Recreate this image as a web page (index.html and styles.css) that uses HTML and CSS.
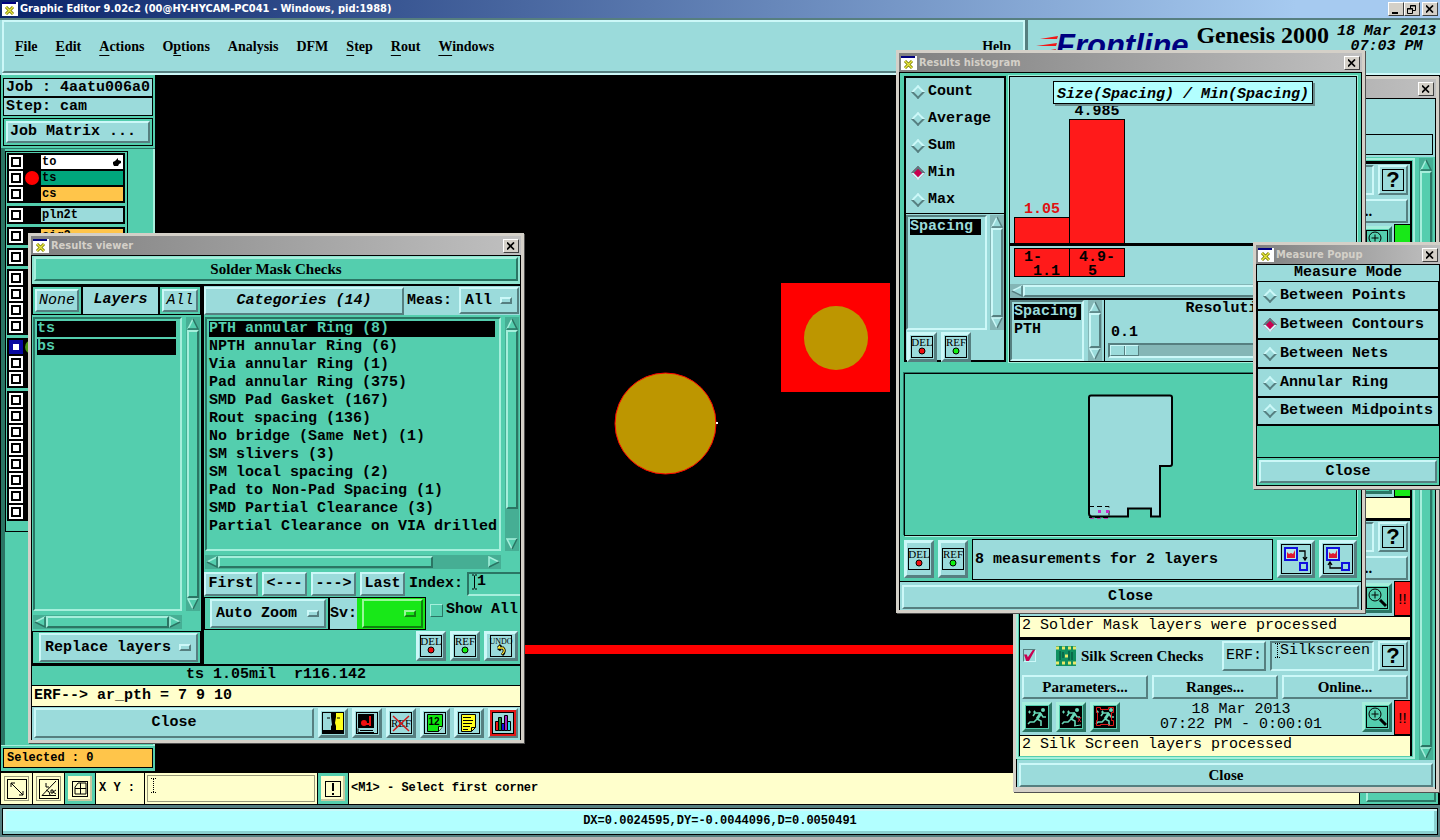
FILE: index.html
```
<!DOCTYPE html>
<html lang="en">
<head>
  <meta charset="UTF-8">
  <meta name="viewport" content="width=device-width, initial-scale=1.0">
  <title>Graphic Editor</title>
  <link rel="stylesheet" href="styles.css">
</head>
<body>

<!-- Shared icon symbols -->
<svg class="symbols" aria-hidden="true">
  <symbol id="i-win" viewBox="0 0 16 14">
    <rect width="16" height="14" fill="#fff"/><rect width="14" height="2" fill="#000080"/>
    <path d="M4 5l7 7M11 5l-7 7" stroke="#777700" stroke-width="3"/><path d="M4 5l7 7M11 5l-7 7" stroke="#e8e840" stroke-width="1.4"/>
  </symbol>
  <symbol id="i-close" viewBox="0 0 8 8"><path d="M0 .5l7 7M7 .5l-7 7" stroke="#000" stroke-width="1.7"/></symbol>
  <symbol id="i-up" viewBox="0 0 12 12"><path d="M6 1L11 11H1z" fill="var(--face)"/><path d="M6 1L1 11" stroke="var(--hi)" stroke-width="1.5"/><path d="M6 1l5 10H1" fill="none" stroke="var(--lo)" stroke-width="1.5"/></symbol>
  <symbol id="i-down" viewBox="0 0 12 12"><path d="M6 11L11 1H1z" fill="var(--face)"/><path d="M11 1H1l5 10" fill="none" stroke="var(--hi)" stroke-width="1.5"/><path d="M11 1L6 11" stroke="var(--lo)" stroke-width="1.5"/></symbol>
  <symbol id="i-left" viewBox="0 0 12 12"><path d="M1 6L11 1v10z" fill="var(--face)"/><path d="M11 1L1 6" stroke="var(--hi)" stroke-width="1.5"/><path d="M11 1v10L1 6" fill="none" stroke="var(--lo)" stroke-width="1.5"/></symbol>
  <symbol id="i-right" viewBox="0 0 12 12"><path d="M11 6L1 1v10z" fill="var(--face)"/><path d="M1 11V1l10 5" fill="none" stroke="var(--hi)" stroke-width="1.5"/><path d="M11 6L1 11" stroke="var(--lo)" stroke-width="1.5"/></symbol>
  <symbol id="i-caret" viewBox="0 0 5 15"><path d="M0 .5h2M3 .5h2M0 14.5h2M3 14.5h2M2.5 1v13" stroke="#000"/></symbol>
  <symbol id="i-caret-dim" viewBox="0 0 5 15"><path d="M2.5 1v13M0 .5h5M0 14.5h5" stroke="#000" stroke-dasharray="1 1"/></symbol>
  <symbol id="i-del" viewBox="0 0 22 22"><rect x=".5" y=".5" width="21" height="21" fill="none" stroke="#000"/><text x="11" y="10" text-anchor="middle" class="icon-text">DEL</text><circle cx="11" cy="15" r="3" fill="#f01010" stroke="#000"/></symbol>
  <symbol id="i-ref" viewBox="0 0 22 22"><rect x=".5" y=".5" width="21" height="21" fill="none" stroke="#000"/><text x="11" y="10" text-anchor="middle" class="icon-text">REF</text><circle cx="11" cy="15" r="3" fill="#10f010" stroke="#000"/></symbol>
  <symbol id="i-undo" viewBox="0 0 26 22"><rect x="2.500" y=".5" width="21" height="21" fill="none" stroke="#000"/><text x="13" y="9" text-anchor="middle" class="icon-text-small">UNDO</text><path d="M10 13h5q3 3-1 7M10 13l3-3M10 13l3 2" fill="none" stroke="#000" stroke-width="3"/><path d="M10 13h5q3 3-1 6M10 13l2-2" fill="none" stroke="#ffe838" stroke-width="1.3"/></symbol>
  <symbol id="i-contrast" viewBox="0 0 22 22"><path d="M0 0h22v22H0z"/><path d="M1 1h8v4l1 8-1 1v4H1z" fill="#9bdbdb"/><path d="M14 1h7v17h-7v-4l-1-3 1-6z" fill="#ffff20"/><path d="M5 6h3M15 6h3" stroke="#000"/></symbol>
  <symbol id="i-disk" viewBox="0 0 22 22"><rect x=".5" y=".5" width="21" height="21" fill="none" stroke="#000"/><path d="M2 2h16v14H2z"/><circle cx="8" cy="11" r="3" fill="#f01010"/><path d="M8 12h6M14 4v10" stroke="#f01010" stroke-width="2"/><path d="M4 18.500h13M2 16.500v4h16" fill="none" stroke="#000"/></symbol>
  <symbol id="i-noref" viewBox="0 0 22 22"><rect x=".5" y=".5" width="21" height="21" fill="none" stroke="#000"/><text x="11" y="15" text-anchor="middle" class="icon-text">REF</text><path d="M3 4l16 15M19 4L3 19" stroke="#d01818" stroke-width="1.500"/></symbol>
  <symbol id="i-page12" viewBox="0 0 22 22"><rect x=".5" y=".5" width="21" height="21" fill="none" stroke="#000"/><path d="M3.500 2.500h15v12l-4 5h-11z" fill="#10e810" stroke="#000"/><path d="M18.500 14.500h-4v5" fill="#b0ffb0" stroke="#000"/><text x="10" y="13" text-anchor="middle" class="icon-num">12</text></symbol>
  <symbol id="i-notes" viewBox="0 0 22 22"><rect x=".5" y=".5" width="21" height="21" fill="none" stroke="#000"/><path d="M3.500 2.500h14v13l-4 4h-10z" fill="#ffff20" stroke="#000"/><path d="M17.500 15.500h-4v4M5 5.500h8M5 8.500h10M5 11.500h9M5 14.500h7M5 17.500h5" fill="none" stroke="#000"/></symbol>
  <symbol id="i-chart" viewBox="0 0 22 22"><rect x=".5" y=".5" width="21" height="21" fill="#9bdbdb" stroke="#000"/><g stroke="#000"><path d="M3.500 9.500h3v9h-3z" fill="#f01818"/><path d="M6.500 5.500h3v13h-3z" fill="#109030"/><path d="M9.500 11.500h3v7h-3z" fill="#1010e0"/><path d="M12.500 3.500h3v15h-3z" fill="#a020c0"/><path d="M15.500 9.500h3v9h-3z" fill="#20d8f0"/></g></symbol>
  <symbol id="i-zoom" viewBox="0 0 22 22"><rect x=".5" y=".5" width="21" height="21" fill="none" stroke="#000"/><circle cx="9" cy="8" r="6" fill="none" stroke="#000"/><path d="M5.500 8h7M9 4.500v7" stroke="#000"/><path d="M14 13l6 6" stroke="#000" stroke-width="3"/></symbol>
  <symbol id="i-run" viewBox="0 0 22 22">
    <path d="M0 0h22v22H0z"/>
    <circle cx="17" cy="4" r="2" fill="#68d8b8"/>
    <path d="M15 7l-4 6" stroke="#68d8b8" stroke-width="3"/>
    <path d="M15 7H9L7 10M15 8l2 3h3M11 13l4 2v5M11 13l-3 3H4l-2 2" fill="none" stroke="#68d8b8" stroke-width="1.600"/>
    <path d="M2 6h3M3.500 4.500v3M7 6h3M8.500 4.500v3" stroke="#68d8b8"/>
  </symbol>
  <symbol id="i-runx" viewBox="0 0 22 22"><use href="#i-run"/><path d="M17 11l4 5M21 11l-3 5" stroke="#d01830"/><path d="M14 20l7-1" stroke="#68d8b8"/></symbol>
  <symbol id="i-runr" viewBox="0 0 22 22"><use href="#i-run"/><path d="M2.500 1.500h4v2h8v-2h5v5h-2v8h2v5h-5v-1h-8v1h-4v-5h1v-8h-1z" fill="none" stroke="#e01818"/></symbol>
  <symbol id="i-pcb" viewBox="0 0 20 20"><path d="M0 0h20v20H0z" fill="#109060"/><path d="M0 2h3M6 2h3M12 2h3M17 2h3M0 17h3M6 17h3M12 17h3M17 17h3M9 10h3" stroke="#e8e868" stroke-width="3"/><path d="M4 5v9M7 6v6M13 5v9M16 6v8" stroke="#043"/></symbol>
  <symbol id="i-diag" viewBox="0 0 22 22"><rect x="1.500" y="1.500" width="19" height="19" fill="none" stroke="#000"/><path d="M5 5l12 12M5 9V5h4M13 17h4v-4" fill="none" stroke="#000"/></symbol>
  <symbol id="i-angle" viewBox="0 0 22 22"><rect x="1.500" y="1.500" width="19" height="19" fill="none" stroke="#000"/><path d="M18 3L4 17.500h14M8 5v4h3M8 12q4 1 4 5M13 12h2v3h-2zM18 12l-3 2 3 2" fill="none" stroke="#000"/></symbol>
  <symbol id="i-grid" viewBox="0 0 22 22"><rect x="3.500" y="3.500" width="15" height="15" fill="none" stroke="#000"/><path d="M6 9l3-4h8v11H6zM11.500 5v11M6 10.500h11" fill="none" stroke="#000"/></symbol>
  <symbol id="i-bang" viewBox="0 0 22 22"><rect x="3.500" y="3.500" width="15" height="15" fill="none" stroke="#000"/><path d="M11 5v8M11 15v2" stroke="#000" stroke-width="2"/></symbol>
  <symbol id="i-copydown" viewBox="0 0 30 30"><rect x=".5" y=".5" width="29" height="29" fill="none" stroke="#000"/><rect x="4" y="4" width="12" height="12" fill="#b8e8e8" stroke="#1010e0" stroke-width="2"/><path d="M6 8l2 2 2-1 2 1 2-4v8H6z" fill="#e01830"/><path d="M18 7h6v8M22 13l2 3 2-3" fill="none" stroke="#000" stroke-width="1.300"/><rect x="19" y="19" width="7" height="7" fill="none" stroke="#1010e0" stroke-width="2"/></symbol>
  <symbol id="i-copyup" viewBox="0 0 30 30"><rect x=".5" y=".5" width="29" height="29" fill="none" stroke="#000"/><rect x="4" y="4" width="12" height="12" fill="#b8e8e8" stroke="#1010e0" stroke-width="2"/><path d="M6 8l2 2 2-1 2 1 2-4v8H6z" fill="#e01830"/><path d="M18 24H7v-5M5 21l2-3 2 3" fill="none" stroke="#000" stroke-width="1.300"/><rect x="19" y="19" width="7" height="7" fill="none" stroke="#1010e0" stroke-width="2"/></symbol>
  <symbol id="i-hand" viewBox="0 0 8 8"><path d="M5 0v2l3 1v2L6 6 5 8H1L0 6V4l2-1z"/></symbol>
</svg>

<!-- Main window -->
<header class="main-title">
  <svg class="win-icon"><use href="#i-win"/></svg>
  <span class="win-name">Graphic Editor 9.02c2 (00@HY-HYCAM-PC041 - Windows, pid:1988)</span>
  <div class="win-buttons">
    <button class="win-button" aria-label="Minimize"><svg width="10" height="9"><path d="M1 8h6" stroke="#000" stroke-width="2"/></svg></button>
    <button class="win-button" aria-label="Restore"><svg width="10" height="9"><path d="M3.500 3V.5h5v5H6M3 1h6M.5 3.500h5v5h-5zM0 4h6" fill="none" stroke="#000"/></svg></button>
    <button class="win-button apart" aria-label="Close"><svg width="8" height="8"><use href="#i-close"/></svg></button>
  </div>
</header>

<div class="top-bar aqua">
  <nav class="menu-bar">
    <a href="#"><u>F</u>ile</a>
    <a href="#"><u>E</u>dit</a>
    <a href="#"><u>A</u>ctions</a>
    <a href="#">O<u>p</u>tions</a>
    <a href="#">Analysis</a>
    <a href="#">DFM</a>
    <a href="#"><u>S</u>tep</a>
    <a href="#"><u>R</u>out</a>
    <a href="#"><u>W</u>indows</a>
    <a href="#" class="help">Help</a>
  </nav>
  <div class="brand">
    <div class="logo">
      <svg width="22" height="20"><path d="M22 1L4 4h17zM21 8L0 11h20zM20 14L4 17h15z" fill="#f01818"/></svg>
      <span>Frontline</span>
    </div>
    <span class="product">Genesis 2000</span>
    <span class="clock">18 Mar 2013<br>07:03 PM</span>
  </div>
</div>

<main class="work">
  <aside class="sidebar teal">
    <div class="job">
      <div class="job-line">Job : 4aatu006a0</div>
      <div class="job-line">Step: cam</div>
      <div class="job-matrix"><button class="raised aqua">Job Matrix ...</button></div>
    </div>
    <div class="layers">
      <div class="layer-list">
        <div class="layer-group">
          <label class="layer"><input type="checkbox"><i></i><span class="white">to<svg width="8" height="8"><use href="#i-hand"/></svg></span></label>
          <label class="layer"><input type="checkbox"><i class="dot red"></i><span class="green">ts</span></label>
          <label class="layer"><input type="checkbox"><i></i><span class="orange">cs</span></label>
        </div>
        <div class="layer-group"><label class="layer"><input type="checkbox"><i></i><span class="blue">pln2t</span></label></div>
        <div class="layer-group"><label class="layer"><input type="checkbox"><i></i><span class="orange">sig2</span></label></div>
        <div class="layer-group"><label class="layer"><input type="checkbox"><i></i></label></div>
        <div class="layer-group">
          <label class="layer"><input type="checkbox"><i></i></label>
          <label class="layer"><input type="checkbox"><i></i></label>
          <label class="layer"><input type="checkbox"><i></i></label>
          <label class="layer"><input type="checkbox"><i></i></label>
        </div>
        <div class="layer-group">
          <label class="layer"><input type="checkbox" checked><i class="dot leaf"></i></label>
          <label class="layer"><input type="checkbox"><i></i></label>
          <label class="layer"><input type="checkbox"><i></i></label>
        </div>
        <div class="layer-group">
          <label class="layer"><input type="checkbox"><i></i></label>
          <label class="layer"><input type="checkbox"><i></i></label>
          <label class="layer"><input type="checkbox"><i></i></label>
          <label class="layer"><input type="checkbox"><i></i></label>
          <label class="layer"><input type="checkbox"><i></i></label>
          <label class="layer"><input type="checkbox"><i></i></label>
          <label class="layer"><input type="checkbox"><i></i></label>
          <label class="layer"><input type="checkbox"><i></i></label>
        </div>
      </div>
    </div>
    <div class="selected-box"><div>Selected : 0</div></div>
  </aside>

  <!-- Board drawing -->
  <svg class="board">
    <rect x="340" y="570" width="560" height="9" fill="#f00"/>
    <rect x="626" y="208" width="109" height="109" fill="#f00"/>
    <circle cx="681" cy="263" r="32" fill="#bd9600"/>
    <circle cx="510.500" cy="348.500" r="50.500" fill="#bd9600" stroke="#f00"/>
    <rect x="561" y="347" width="2" height="2" fill="#fff"/>
  </svg>
</main>

<div class="command-bar">
  <button class="mode cream" aria-label="Diagonal"><svg width="22" height="22"><use href="#i-diag"/></svg></button>
  <button class="mode cream" aria-label="Angle"><svg width="22" height="22"><use href="#i-angle"/></svg></button>
  <button class="mode cream on" aria-label="Grid"><svg width="22" height="22"><use href="#i-grid"/></svg></button>
  <label class="xy" for="xy">X Y :</label>
  <div class="entry cream xy-entry"><svg width="5" height="15"><use href="#i-caret-dim"/></svg><input id="xy" type="text"></div>
  <button class="mode cream on" aria-label="Alert"><svg width="22" height="22"><use href="#i-bang"/></svg></button>
  <div class="prompt">&lt;M1&gt; - Select first corner</div>
  <div class="abort teal"><button class="raised">Abort</button></div>
</div>
<footer class="status"><div>DX=0.0024595,DY=-0.0044096,D=0.0050491</div></footer>

<!-- Checklist window -->
<section class="window checks">
  <div class="title"><button class="win-button" aria-label="Close"><svg width="8" height="8"><use href="#i-close"/></svg></button></div>
  <div class="client aqua">
    <div class="checks-head"><div></div></div>
    <div class="checks-body teal">
      <div class="check-list aqua">
        <div class="check">
          <div class="check-top"><div class="erf-entry"></div><button class="raised ask" aria-label="Help"><b>?</b></button></div>
          <div class="check-buttons"><span></span><span></span><button class="raised">Online...</button></div>
          <div class="check-run"><button class="tool teal zoom" aria-label="Zoom"><svg width="22" height="22"><use href="#i-zoom"/></svg></button><div class="flag ok"></div></div>
          <div class="message"></div>
        </div>
        <div class="check">
          <div class="check-top"></div>
          <div class="check-buttons"></div>
          <div class="check-run"></div>
          <div class="message"></div>
        </div>
        <div class="check">
          <div class="check-top"></div>
          <div class="check-buttons"></div>
          <div class="check-run"><button class="tool teal zoom" aria-label="Zoom"><svg width="22" height="22"><use href="#i-zoom"/></svg></button><div class="flag ok"></div></div>
          <div class="message"></div>
        </div>
        <div class="check">
          <div class="check-top"><div class="erf-entry"></div><button class="raised ask" aria-label="Help"><b>?</b></button></div>
          <div class="check-buttons"><span></span><span></span><button class="raised">Online...</button></div>
          <div class="check-run"><button class="tool teal zoom" aria-label="Zoom"><svg width="22" height="22"><use href="#i-zoom"/></svg></button><div class="flag">!!</div></div>
          <div class="message">2 Solder Mask layers were processed</div>
        </div>
        <div class="check">
          <div class="check-top">
            <input type="checkbox" class="tick" id="silk" checked>
            <svg width="20" height="20" class="pcb"><use href="#i-pcb"/></svg>
            <label for="silk">Silk Screen Checks</label>
            <button class="raised erf">ERF:</button>
            <div class="erf-entry"><svg width="5" height="15"><use href="#i-caret-dim"/></svg><input type="text" value="Silkscreen" aria-label="ERF"></div>
            <button class="raised ask" aria-label="Help"><b>?</b></button>
          </div>
          <div class="check-buttons"><button class="raised">Parameters...</button><button class="raised">Ranges...</button><button class="raised">Online...</button></div>
          <div class="check-run">
            <button class="tool teal" aria-label="Run"><svg width="22" height="22"><use href="#i-run"/></svg></button>
            <button class="tool teal" aria-label="Run on selection"><svg width="22" height="22"><use href="#i-runx"/></svg></button>
            <button class="tool teal" aria-label="Run in area"><svg width="22" height="22"><use href="#i-runr"/></svg></button>
            <div class="run-time">18 Mar 2013<br>07:22 PM - 0:00:01</div>
            <button class="tool teal" aria-label="Zoom"><svg width="22" height="22"><use href="#i-zoom"/></svg></button>
            <div class="flag">!!</div>
          </div>
          <div class="message">2 Silk Screen layers processed</div>
        </div>
      </div>
      <div class="scroll vertical"><svg><use href="#i-up"/></svg><div class="thumb"></div><svg><use href="#i-down"/></svg></div>
    </div>
    <button class="raised checks-close">Close</button>
  </div>
</section>

<!-- Results viewer -->
<section class="window viewer">
  <div class="title"><svg class="win-icon"><use href="#i-win"/></svg><span class="win-name">Results viewer</span><button class="win-button" aria-label="Close"><svg width="8" height="8"><use href="#i-close"/></svg></button></div>
  <div class="client teal">
    <div class="viewer-head"><div class="raised">Solder Mask Checks</div></div>
    <div class="panes">
      <div class="layer-pane">
        <div class="pane-head aqua">
          <button class="raised thin">None</button>
          <div>Layers</div>
          <button class="raised thin">All</button>
        </div>
        <div class="scroller">
          <ul class="list sunken"><li class="picked">ts</li><li class="picked">bs</li></ul>
          <div class="scroll vertical"><svg><use href="#i-up"/></svg><div class="thumb"></div><svg><use href="#i-down"/></svg></div>
          <div class="scroll"><svg><use href="#i-left"/></svg><div class="thumb"></div><svg><use href="#i-right"/></svg></div>
        </div>
        <div class="option-row"><div class="option raised aqua"><select aria-label="Layer mode"><option>Replace layers</option></select></div></div>
      </div>
      <div class="category-pane">
        <div class="category-head aqua">
          <button class="raised">Categories (14)</button>
          <label for="meas">Meas:</label>
          <div class="option raised"><select id="meas"><option>All</option></select></div>
        </div>
        <div class="scroller">
          <ul class="list sunken">
            <li class="picked">PTH annular Ring (8)</li>
            <li>NPTH annular Ring (6)</li>
            <li>Via annular Ring (1)</li>
            <li>Pad annular Ring (375)</li>
            <li>SMD Pad Gasket (167)</li>
            <li>Rout spacing (136)</li>
            <li>No bridge (Same Net) (1)</li>
            <li>SM slivers (3)</li>
            <li>SM local spacing (2)</li>
            <li>Pad to Non-Pad Spacing (1)</li>
            <li>SMD Partial Clearance (3)</li>
            <li>Partial Clearance on VIA drilled</li>
          </ul>
          <div class="scroll vertical"><svg><use href="#i-up"/></svg><div class="thumb" style="flex: 0 0 77%"></div><svg class="end"><use href="#i-down"/></svg></div>
          <div class="scroll"><svg><use href="#i-left"/></svg><div class="thumb" style="flex: 0 0 73%"></div><svg class="end"><use href="#i-right"/></svg></div>
        </div>
        <div class="step-row">
          <button class="raised aqua">First</button><button class="raised aqua">&lt;---</button><button class="raised aqua">---&gt;</button><button class="raised aqua">Last</button>
          <label for="index">Index:</label>
          <div class="entry sunken"><svg width="5" height="15"><use href="#i-caret"/></svg><input id="index" type="text" value="1"></div>
        </div>
        <div class="zoom-row">
          <div class="boxed"><div class="option raised aqua"><select aria-label="Zoom"><option>Auto Zoom</option></select></div></div>
          <div class="boxed sv aqua"><label for="sv">Sv:</label><div class="lime sv-color"><div class="option raised"><select id="sv"><option></option></select></div></div></div>
          <label class="show-all"><input type="checkbox">Show All</label>
        </div>
        <div class="tool-row">
          <button class="tool aqua" aria-label="Delete"><svg width="22" height="22"><use href="#i-del"/></svg></button>
          <button class="tool aqua" aria-label="Reference"><svg width="22" height="22"><use href="#i-ref"/></svg></button>
          <button class="tool aqua wide" aria-label="Undo"><svg width="26" height="22"><use href="#i-undo"/></svg></button>
        </div>
      </div>
    </div>
    <div class="measure-line">ts 1.05mil&nbsp; r116.142</div>
    <div class="erf-line">ERF--&gt; ar_pth = 7 9 10</div>
    <div class="viewer-foot aqua">
      <button class="raised">Close</button>
      <button class="tool" aria-label="Contrast"><svg width="22" height="22"><use href="#i-contrast"/></svg></button>
      <button class="tool" aria-label="Save"><svg width="22" height="22"><use href="#i-disk"/></svg></button>
      <button class="tool" aria-label="Clear references"><svg width="22" height="22"><use href="#i-noref"/></svg></button>
      <button class="tool" aria-label="Numbers"><svg width="22" height="22"><use href="#i-page12"/></svg></button>
      <button class="tool" aria-label="Notes"><svg width="22" height="22"><use href="#i-notes"/></svg></button>
      <button class="tool on" aria-label="Histogram"><svg width="22" height="22"><use href="#i-chart"/></svg></button>
    </div>
  </div>
</section>

<!-- Results histogram -->
<section class="window histogram">
  <div class="title"><svg class="win-icon"><use href="#i-win"/></svg><span class="win-name">Results histogram</span><button class="win-button" aria-label="Close"><svg width="8" height="8"><use href="#i-close"/></svg></button></div>
  <div class="client teal">
    <div class="hist-top">
      <div class="hist-side aqua">
        <div class="stat-list">
          <label><input type="radio" name="stat">Count</label>
          <label><input type="radio" name="stat">Average</label>
          <label><input type="radio" name="stat">Sum</label>
          <label><input type="radio" name="stat" checked>Min</label>
          <label><input type="radio" name="stat">Max</label>
        </div>
        <div class="value-list">
          <ul class="list sunken"><li class="picked">Spacing</li></ul>
          <div class="scroll vertical"><svg><use href="#i-up"/></svg><div class="thumb"></div><svg><use href="#i-down"/></svg></div>
        </div>
        <div class="side-tools">
          <button class="tool" aria-label="Delete"><svg width="22" height="22"><use href="#i-del"/></svg></button>
          <button class="tool" aria-label="Reference"><svg width="22" height="22"><use href="#i-ref"/></svg></button>
        </div>
      </div>
      <div class="hist-main aqua">
        <div class="chart">
          <div class="chart-title">Size(Spacing) / Min(Spacing)</div>
          <div class="bars">
            <div class="bar-col low"><span>1.05</span><div class="bar" style="height: 26px"></div></div>
            <div class="bar-col"><span>4.985</span><div class="bar" style="height: 124px"></div></div>
          </div>
        </div>
        <div class="ranges">
          <div>1-<br>&nbsp;1.1</div>
          <div>4.9-<br>&nbsp;5</div>
        </div>
        <div class="scroll"><svg><use href="#i-left"/></svg><div class="thumb"></div><svg><use href="#i-right"/></svg></div>
        <div class="resolution-row">
          <ul class="list sunken"><li class="picked">Spacing</li><li>PTH</li></ul>
          <div class="scroll vertical"><svg><use href="#i-up"/></svg><div class="thumb"></div><svg><use href="#i-down"/></svg></div>
          <div class="resolution">
            <label for="res">Resolution</label>
            <output for="res">0.1</output>
            <input type="range" id="res" min="0" max="100" value="0">
          </div>
        </div>
      </div>
    </div>
    <div class="overview">
      <svg width="90" height="128">
        <path d="M5 3.500h77q2 0 2 2V72q0 2-2 2h-10v50.500h-9v-8H40v8H4q-3 0-3-3V5.500q0-2 2-2z" fill="#9bdbdb" stroke="#000" stroke-width="2"/>
        <path d="M1 114.500h20v11H1" fill="none" stroke="#000" stroke-dasharray="5 3"/>
        <path d="M10 118h3v3h-3zM18 118h3v3h-3z" fill="#c828c8"/>
        <path d="M2 126.500h20" stroke="#b040b0" stroke-dasharray="4 3"/>
      </svg>
    </div>
    <div class="hist-info">
      <button class="tool tall aqua" aria-label="Delete"><svg width="22" height="22"><use href="#i-del"/></svg></button>
      <button class="tool tall aqua" aria-label="Reference"><svg width="22" height="22"><use href="#i-ref"/></svg></button>
      <div class="count aqua">8 measurements for 2 layers</div>
      <button class="tool big aqua" aria-label="Copy down"><svg width="30" height="30"><use href="#i-copydown"/></svg></button>
      <button class="tool big aqua" aria-label="Copy up"><svg width="30" height="30"><use href="#i-copyup"/></svg></button>
    </div>
    <div class="hist-foot aqua"><button class="raised">Close</button></div>
  </div>
</section>

<!-- Measure popup -->
<section class="window measure">
  <div class="title"><svg class="win-icon"><use href="#i-win"/></svg><span class="win-name">Measure Popup</span><button class="win-button" aria-label="Close"><svg width="8" height="8"><use href="#i-close"/></svg></button></div>
  <div class="client teal">
    <div class="measure-head">Measure Mode</div>
    <div class="measure-list aqua">
      <label><input type="radio" name="mode">Between Points</label>
      <label><input type="radio" name="mode" checked>Between Contours</label>
      <label><input type="radio" name="mode">Between Nets</label>
      <label><input type="radio" name="mode">Annular Ring</label>
      <label><input type="radio" name="mode">Between Midpoints</label>
    </div>
    <div class="measure-foot"><button class="raised aqua">Close</button></div>
  </div>
</section>

</body>
</html>
```

FILE: styles.css
```
*, *::before, *::after {
  box-sizing: border-box;
}

/* Motif colour sets */
.aqua {
  --face: #9bdbdb;
  --hi: #ccf8f8;
  --lo: #567f80;
  --track: #84b6b6;
  background-color: var(--face);
}

.teal {
  --face: #54ceae;
  --hi: #a6efdc;
  --lo: #2b7564;
  --track: #46ae94;
  background-color: var(--face);
}

.cream {
  --face: #ffffcc;
  --hi: #ffffee;
  --lo: #99997a;
  background-color: var(--face);
}

.lime {
  --face: #18e818;
  --hi: #98f898;
  --lo: #108010;
  background-color: var(--face);
}

body {
  margin: 0;
  height: 100vh;
  display: flex;
  flex-direction: column;
  overflow: hidden;
  background-color: #000;
  color: #000;
  font: bold 15px/18px "Liberation Mono", monospace;
}

button, input, select {
  font: inherit;
  color: inherit;
  margin: 0;
  padding: 0;
}

svg {
  display: block;
  flex: none;
}

.symbols {
  display: none;
}

.icon-text {
  font: 11px "Liberation Serif", serif;
}

.icon-text-small {
  font: 8px "Liberation Serif", serif;
}

.icon-num {
  font: bold 10px "Liberation Sans", sans-serif;
}

.raised {
  background-color: var(--face);
  border: 2px solid;
  border-color: var(--hi) var(--lo) var(--lo) var(--hi);
}

.sunken {
  border: 2px solid;
  border-color: var(--lo) var(--hi) var(--hi) var(--lo);
}

/* Title bars */
.main-title {
  display: flex;
  align-items: center;
  height: 18px;
  flex: none;
  padding: 0 2px;
  background: linear-gradient(to right, #0a246a, #a6caf0 90%);
  color: #fff;
}

.win-icon {
  width: 16px;
  height: 14px;
}

.win-name {
  margin-left: 2px;
  font: bold 11px/16px "DejaVu Sans Condensed", "Noto Sans", sans-serif;
  white-space: nowrap;
}

.win-buttons {
  display: flex;
  margin-left: auto;
}

.win-button {
  display: flex;
  align-items: center;
  justify-content: center;
  width: 16px;
  height: 14px;
  flex: none;
  background-color: #d4d0c8;
  border: 1px solid;
  border-color: #fff #404040 #404040 #fff;
}

.apart {
  margin-left: 2px;
}

/* Menu and brand */
.top-bar {
  display: flex;
  flex: none;
  height: 57px;
  border-top: 2px solid #567f80;
}

.menu-bar {
  display: flex;
  align-items: center;
  flex: 1;
  gap: 18px;
  padding: 0 12px 0 11px;
  margin-left: 2px;
  border: 2px solid;
  border-color: #ccf8f8 #ccf8f8 #567f80;
  box-shadow: 0 2px #ccf8f8;
  margin-bottom: 2px;
  font: bold 14px/18px "Liberation Serif", serif;
}

.menu-bar a {
  color: #000;
  text-decoration: none;
}

.menu-bar u {
  text-underline-offset: 4px;
}

.menu-bar .help {
  margin-left: auto;
}

.brand {
  display: flex;
  justify-content: space-between;
  width: 415px;
  padding: 0 4px 0 8px;
  border-left: 3px solid #567f80;
  border-bottom: 2px solid #ccf8f8;
}

.logo {
  display: flex;
  align-items: flex-start;
  color: #000080;
  font: italic bold 31px/34px "Liberation Sans", sans-serif;
  padding-top: 9px;
}

.logo svg {
  margin: 6px -2px 0 0;
}

.product {
  font: bold 24px/30px "Liberation Serif", serif;
}

.clock {
  padding-top: 4px;
  line-height: 15px;
  font-style: italic;
  text-align: center;
}

/* Sidebar */
.work {
  display: flex;
  flex: 1;
  min-height: 0;
}

.sidebar {
  display: flex;
  flex-direction: column;
  width: 155px;
  border-left: 1px solid #000;
}

.job {
  padding: 3px 2px 2px;
  border-bottom: 1px solid #2b7564;
}

.job-line {
  height: 19px;
  padding-left: 2px;
  background-color: #9bdbdb;
  border: 1px solid #000;
  white-space: nowrap;
}

.job-matrix {
  height: 28px;
  margin-top: 2px;
  padding: 2px;
  border: 1px solid #000;
}

.job-matrix button {
  width: 100%;
  height: 100%;
  padding-left: 2px;
  text-align: left;
}

.layers {
  flex: 1;
  padding-top: 2px;
  background: linear-gradient(to right, #2b7564 4px, transparent 4px);
  border-right: 2px solid #a6efdc;
}

.layer-list {
  display: flex;
  flex-direction: column;
  gap: 3px;
  width: 123px;
  height: 381px;
  margin-left: 4px;
  padding: 1px 2px 0 1px;
  background-color: #54ceae;
  border: 1px solid #000;
}

.layer-group {
  padding: 1px 0;
  background-color: #000;
}

.layer {
  display: flex;
  align-items: center;
  height: 16px;
  padding: 1px 2px;
  font-size: 12px;
  line-height: 14px;
}

.layer input {
  appearance: none;
  width: 14px;
  height: 14px;
  background-color: #fff;
  border: 2px solid #fff;
  box-shadow: inset 0 0 0 2px #000;
}

.layer input:checked {
  border-color: #0808a0;
  box-shadow: inset 0 0 0 2px #0808a0;
}

.layer i {
  width: 18px;
  height: 14px;
}

.layer .dot {
  width: 14px;
  margin: 0 2px;
  border-radius: 7px;
}

.red {
  background-color: #f00;
}

.leaf {
  background-color: #4a9a10;
}

.layer span {
  display: flex;
  align-items: center;
  justify-content: space-between;
  flex: 1;
  height: 14px;
  padding: 0 2px 0 1px;
}

.white {
  background-color: #fff;
}

.green {
  background-color: #00a67c;
}

.orange {
  background-color: #ffc54a;
}

.blue {
  background-color: #9bdbdb;
}

.selected-box {
  padding: 2px 2px 3px;
  border-top: 1px solid #a6efdc;
}

.selected-box div {
  height: 20px;
  padding-left: 3px;
  background-color: #ffc54a;
  border: 1px solid #000;
  font-size: 12px;
}

.board {
  flex: 1;
  height: 100%;
}

/* Command bar and status */
.command-bar {
  display: flex;
  flex: none;
  height: 34px;
  gap: 1px;
  padding: 2px 2px 1px 1px;
  background-color: #000;
  font-size: 12px;
}

.mode {
  display: flex;
  align-items: center;
  justify-content: center;
  width: 31px;
  border: 2px solid #ffffcc;
  outline: 1px solid #99997a;
  outline-offset: -4px;
}

.mode.on {
  width: 30px;
  border: 3px solid #54ceae;
  outline: 0;
  box-shadow: inset -2px -2px #c8c8a0;
}

.xy {
  width: 48px;
  line-height: 30px;
  background-color: #ffffcc;
  padding-left: 3px;
}

.entry {
  display: flex;
  align-items: flex-start;
}

.entry input, .erf-entry input {
  width: 100%;
  min-width: 0;
  background: none;
  border: 0;
  outline: 0;
}

.xy-entry {
  width: 172px;
  padding: 3px 4px;
  border: 2px solid #ffffcc;
  box-shadow: inset 1px 1px #99997a, inset -1px -1px #99997a;
}

.prompt {
  flex: 1;
  padding-left: 2px;
  line-height: 30px;
  background-color: #ffffcc;
}

.abort {
  width: 78px;
  padding: 2px;
}

.abort button {
  width: 70px;
  height: 100%;
  margin-left: 4px;
}

.status {
  flex: none;
  height: 35px;
  padding: 3px 2px;
  background-color: #567f80;
  border-bottom: 3px solid #b4b4b4;
  font-size: 12px;
  text-align: center;
}

.status div {
  height: 27px;
  line-height: 25px;
  background-color: #b2ffff;
  border: 1px solid #000;
  box-shadow: inset 0 2px #ccf8f8, inset -3px -3px #8ad0d0, inset 3px 0 #ccf8f8;
}

/* Windows */
.window {
  position: absolute;
  border: 3px solid #d4d0c8;
  box-shadow: 1px 1px #505050, inset -1px 0 #000;
  background-color: #d4d0c8;
}

.title {
  display: flex;
  align-items: center;
  height: 19px;
  padding: 0 2px;
  background: linear-gradient(to right, #808080, #c0c0c0);
  color: #d4d0c8;
}

.title .win-button {
  margin-left: auto;
}

.client {
  border: 1px solid #000;
  border-bottom: 0;
}

/* Scroll bars */
.scroll {
  display: flex;
  height: 14px;
  padding: 1px;
  background-color: var(--track);
}

.scroll svg {
  width: 12px;
  height: 12px;
}

.thumb {
  flex: 1;
  background-color: var(--face);
  border: 2px solid;
  border-color: var(--hi) var(--lo) var(--lo) var(--hi);
}

.scroll .end {
  margin-left: auto;
}

.vertical {
  flex-direction: column;
  width: 14px;
  height: auto;
}

.vertical .end {
  margin: auto 0 0;
}

.list {
  margin: 0;
  padding: 2px 4px 0 2px;
  list-style: none;
  overflow: hidden;
  white-space: nowrap;
}

.list li {
  height: 16px;
  margin-bottom: 2px;
  line-height: 16px;
}

.picked {
  background-color: #000;
  color: var(--face);
}

/* Small picture buttons */
.tool {
  display: flex;
  align-items: center;
  justify-content: center;
  width: 30px;
  height: 30px;
  flex: none;
  background-color: var(--face);
  border: 3px solid;
  border-color: var(--hi) var(--lo) var(--lo) var(--hi);
}

.wide {
  width: 34px;
}

.tall {
  height: 38px;
}

.big {
  width: 38px;
  height: 38px;
}

/* Option menus */
.option {
  display: flex;
  align-items: center;
  padding: 0 5px 0 4px;
}

.option select {
  appearance: none;
  flex: 1;
  min-width: 0;
  background: none;
  border: 0;
  outline: 0;
}

.option::after {
  content: "";
  width: 12px;
  height: 7px;
  border: 2px solid;
  border-color: var(--hi) var(--lo) var(--lo) var(--hi);
}

/* Diamond radios */
input[type="radio"] {
  appearance: none;
  width: 10px;
  height: 10px;
  margin: 0 5px 0 3px;
  border: 2px solid;
  border-color: #ccf8f8 #567f80 #567f80 #ccf8f8;
  transform: rotate(45deg);
}

input[type="radio"]:checked {
  background-color: #c80050;
  border-color: #567f80 #ccf8f8 #ccf8f8 #567f80;
}

/* Results viewer */
.viewer {
  left: 28px;
  top: 233px;
  width: 496px;
}

.viewer-head {
  padding: 1px 2px 3px;
  background-color: #8fe4d0;
  border-bottom: 2px solid #000;
}

.viewer-head div {
  height: 24px;
  line-height: 20px;
  font-family: "Liberation Serif", serif;
  text-align: center;
}

.panes {
  display: flex;
  border-bottom: 2px solid #000;
}

.layer-pane {
  display: flex;
  flex-direction: column;
  width: 172px;
  border-right: 3px solid #000;
}

.pane-head {
  display: flex;
  justify-content: space-between;
  height: 29px;
  line-height: 26px;
  background-color: #9bdbdb;
  border: 1px solid #000;
  font-style: italic;
}

.pane-head button {
  width: 48px;
  line-height: 18px;
  outline: 2px solid #54ceae;
  outline-offset: -2px;
}

.pane-head button:last-child {
  width: 40px;
}

.pane-head div {
  flex: 1;
  border: solid #000;
  border-width: 0 2px;
  text-align: center;
}

.thin {
  font-weight: normal;
  border-width: 4px;
}

.scroller {
  display: grid;
  grid-template: 1fr 14px / 1fr 14px;
  gap: 4px;
  flex: 1;
  padding: 2px 1px;
}

.option-row {
  height: 33px;
  padding: 1px 2px 1px 6px;
  border: 1px solid #000;
}

.option-row .option {
  height: 29px;
}

.category-pane {
  flex: 1;
  min-width: 0;
}

.category-head {
  display: flex;
  align-items: center;
  height: 29px;
}

.category-head button {
  width: 200px;
  height: 28px;
  margin-right: 3px;
  font-style: italic;
}

.category-head .option {
  width: 60px;
  height: 27px;
  margin-left: 7px;
}

.category-pane .scroller {
  height: 256px;
}

.step-row {
  display: flex;
  align-items: center;
  gap: 4px;
  height: 26px;
}

.step-row button {
  height: 24px;
  width: 45px;
}

.step-row button:first-child {
  width: 54px;
}

.step-row .entry {
  flex: 1;
  height: 24px;
  padding-left: 3px;
  border-right: 0;
}

.step-row .entry input, .step-row .entry svg {
  height: 16px;
}

.zoom-row {
  display: flex;
  height: 33px;
}

.boxed {
  display: flex;
  align-items: center;
  padding: 1px 2px 1px 5px;
  border: 1px solid #000;
}

.boxed .option {
  width: 116px;
  height: 29px;
}

.sv {
  padding: 0;
}

.sv-color {
  padding: 1px 2px 1px 5px;
}

.sv .option {
  width: 61px;
  height: 29px;
}

.show-all {
  display: flex;
  align-items: center;
  margin-left: 4px;
  height: 26px;
}

.show-all input {
  appearance: none;
  width: 13px;
  height: 13px;
  margin-right: 3px;
  border: 1px solid;
  border-color: #a6efdc #2b7564 #2b7564 #a6efdc;
}

.tool-row {
  display: flex;
  justify-content: flex-end;
  gap: 4px;
  padding: 1px 2px 3px;
}

.measure-line {
  height: 20px;
  border-bottom: 1px solid #000;
  text-align: center;
}

.erf-line {
  height: 21px;
  line-height: 20px;
  padding-left: 2px;
  background-color: #ffffcc;
  border-bottom: 1px solid #000;
}

.viewer-foot {
  display: flex;
  gap: 4px;
  padding: 1px 2px 2px;
}

.viewer-foot button:first-child {
  flex: 1;
}

.tool.on {
  outline: 2px solid #e01818;
  outline-offset: -4px;
}

/* Results histogram */
.histogram {
  left: 896px;
  top: 50px;
  width: 469px;
}

.hist-top {
  display: flex;
  gap: 3px;
  height: 294px;
  padding: 3px 4px 5px 4px;
}

.hist-side {
  width: 102px;
  border: 2px solid #000;
}

.stat-list {
  border-bottom: 1px solid #000;
}

.stat-list label, .measure-list label {
  display: flex;
  align-items: center;
  height: 27px;
  padding-left: 4px;
}

.value-list {
  display: flex;
  gap: 3px;
  height: 116px;
  padding-top: 1px;
}

.value-list .list {
  flex: 1;
}

.side-tools {
  display: flex;
  gap: 4px;
  padding: 2px 0 0 1px;
}

.hist-main {
  display: flex;
  flex-direction: column;
  flex: 1;
  min-width: 0;
  border: 1px solid #000;
  outline: 1px solid #a6efdc;
}

.chart {
  position: relative;
  display: flex;
  align-items: flex-end;
  height: 169px;
  padding-left: 4px;
  border-bottom: 3px solid #000;
}

/* Title floats over the plot */
.chart-title {
  position: absolute;
  top: 4px;
  left: 43px;
  padding: 3px 3px 0;
  height: 23px;
  line-height: 20px;
  background-color: #b2ffff;
  border: 1px solid #000;
  box-shadow: 2px 2px #6a8c8c;
  font-style: italic;
}

.bars, .ranges {
  display: flex;
}

.bars {
  align-items: flex-end;
}

.bar-col {
  width: 56px;
  margin-right: -1px;
  line-height: 15px;
  text-align: center;
}

.low span {
  color: #e01010;
}

.bar {
  background-color: #ff1a1a;
  border: 1px solid #000;
  border-bottom: 0;
}

.ranges {
  padding: 2px 0 0 4px;
}

.ranges div {
  width: 56px;
  height: 29px;
  margin-right: -1px;
  padding: 2px 0 0 9px;
  line-height: 14px;
  background-color: #ff1a1a;
  border: 1px solid #000;
}

.hist-main > .scroll {
  margin-top: 7px;
}

.resolution-row {
  display: flex;
  flex: 1;
  border-top: 2px solid #000;
}

.resolution-row .list {
  width: 74px;
  padding-right: 1px;
}

.resolution-row > .scroll {
  margin: 0 2px 0 4px;
}

.resolution {
  display: flex;
  flex-direction: column;
  justify-content: space-between;
  flex: 1;
  padding: 0 3px 3px;
  border-left: 1px solid #000;
}

.resolution label {
  text-align: center;
}

.resolution output {
  padding: 4px 0 0 3px;
}

.resolution input {
  appearance: none;
  width: 100%;
  height: 15px;
  background-color: #84b6b6;
  border: 2px solid;
  border-color: #567f80 #ccf8f8 #ccf8f8 #567f80;
}

.resolution input::-webkit-slider-thumb {
  appearance: none;
  width: 29px;
  height: 11px;
  background: linear-gradient(to right, #9bdbdb 13px, #567f80 13px, #567f80 14px, #ccf8f8 14px, #ccf8f8 15px, #9bdbdb 15px);
  border: 1px solid;
  border-color: #ccf8f8 #567f80 #567f80 #ccf8f8;
}

.overview {
  display: flex;
  justify-content: center;
  height: 163px;
  margin: 6px 4px 1px;
  padding: 18px 0 0 4px;
  border: 1px solid #000;
  box-shadow: -1px -1px #2b7564, 1px 1px #a6efdc;
}

.hist-info {
  display: flex;
  align-items: center;
  gap: 4px;
  height: 45px;
  padding: 2px 4px;
  border-bottom: 1px solid #000;
}

.count {
  flex: 1;
  height: 41px;
  padding-left: 2px;
  line-height: 40px;
  border: 1px solid #000;
}

.hist-foot {
  padding: 3px 2px 1px;
}

.hist-foot button {
  display: block;
  width: 100%;
  height: 24px;
}

/* Measure popup */
.measure {
  left: 1253px;
  top: 242px;
  width: 190px;
}

.measure-head {
  height: 16px;
  line-height: 15px;
  background-color: #9bdbdb;
  text-align: center;
}

.measure-list label {
  height: 29px;
  padding-left: 4px;
  border: 1px solid #000;
  white-space: nowrap;
}

.measure-list label:last-child {
  border-bottom-width: 2px;
}

.measure-foot {
  margin-top: 31px;
  padding: 2px;
  border: solid #000;
  border-width: 1px 0;
}

.measure-foot button {
  display: block;
  width: 100%;
  height: 23px;
}

/* Checklist window */
.checks {
  left: 1013px;
  top: 76px;
  width: 426px;
}

.checks-head {
  padding: 35px 2px 2px;
}

.checks-head div {
  height: 21px;
  border: 1px solid #000;
}

.checks-body {
  display: flex;
  justify-content: space-between;
  padding: 1px 2px 0;
  font-weight: normal;
}

.check-list {
  width: 393px;
  margin: 3px 0 4px;
  outline: 2px solid #a6efdc;
  outline-offset: 1px;
}

.check {
  height: 119px;
  border: solid #000;
  border-width: 3px 2px 0 1px;
}

.check:last-child {
  border-bottom-width: 2px;
}

.check-top {
  display: flex;
  align-items: center;
  height: 35px;
  padding: 0 2px 4px 3px;
  font: bold 15px/18px "Liberation Serif", serif;
}

.check-top label {
  margin-left: 5px;
}

.pcb {
  margin-left: 20px;
}

.tick {
  appearance: none;
  width: 13px;
  height: 13px;
  border: 1px solid;
  border-color: #567f80 #ccf8f8 #ccf8f8 #567f80;
}

.tick:checked::after {
  content: "";
  display: block;
  width: 11px;
  height: 11px;
  background-color: #c80050;
  clip-path: polygon(0 40%, 25% 40%, 35% 65%, 80% 0, 100% 0, 45% 100%, 20% 100%);
}

.erf {
  width: 44px;
  height: 30px;
  margin-left: auto;
  font: normal 15px/18px "Liberation Mono", monospace;
}

.erf-entry {
  display: flex;
  width: 104px;
  height: 30px;
  margin: 0 4px;
  border: 2px solid;
  border-color: #567f80 #ccf8f8 #ccf8f8 #567f80;
  font: normal 15px/16px "Liberation Mono", monospace;
}

.check-top .erf-entry:first-child {
  margin-left: auto;
}

.erf-entry svg {
  margin-left: 3px;
}

.erf-entry input {
  height: 16px;
}

.ask {
  width: 30px;
  height: 30px;
  padding: 2px;
}

.ask b {
  display: block;
  border: 1px solid #000;
  font: bold 22px/20px "Liberation Sans", sans-serif;
}

.check-buttons {
  display: grid;
  grid-template-columns: repeat(3, 1fr);
  gap: 4px;
  height: 24px;
  padding: 0 2px;
  font: bold 15px/18px "Liberation Serif", serif;
}

.check-run {
  display: flex;
  align-items: center;
  gap: 4px;
  height: 36px;
  padding-left: 2px;
}

.run-time {
  flex: 1;
  line-height: 15px;
  text-align: center;
}

.zoom {
  margin-left: auto;
}

.flag {
  width: 16px;
  height: 35px;
  margin-left: -2px;
  line-height: 33px;
  background-color: #ff1a1a;
  border: 1px solid #000;
  border-right: 0;
  font-family: "Liberation Sans", sans-serif;
  text-align: center;
}

.flag.ok {
  background-color: #18e818;
}

.message {
  height: 21px;
  padding-left: 2px;
  background-color: #ffffcc;
  border-top: 1px solid #000;
}

.checks-close {
  display: block;
  width: calc(100% - 4px);
  height: 24px;
  margin: 3px 2px 2px;
  font-family: "Liberation Serif", serif;
}
```
